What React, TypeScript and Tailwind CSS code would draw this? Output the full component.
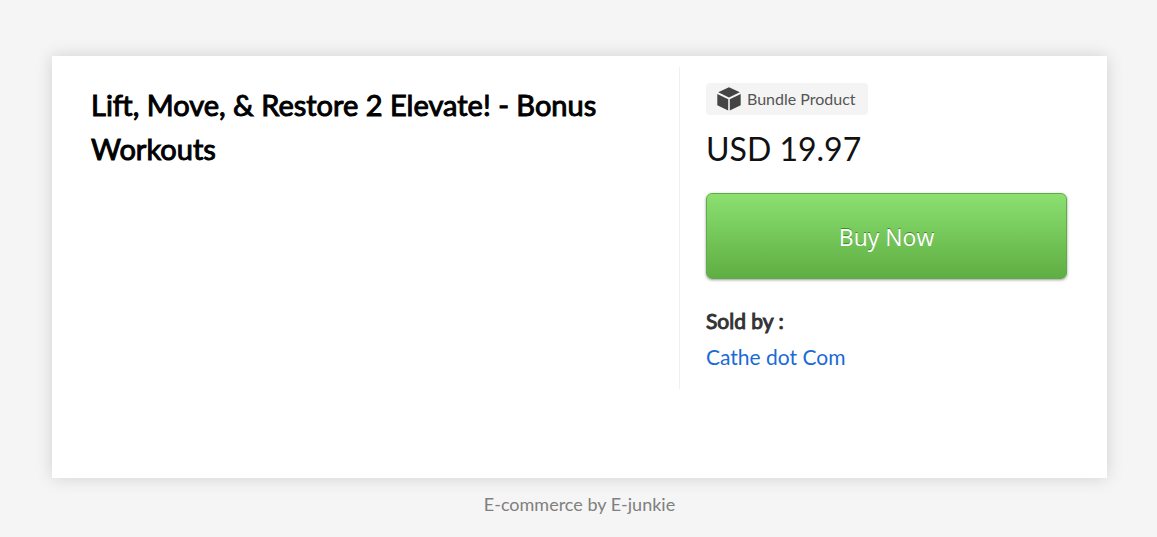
import React from 'react';

const product = {
  name: 'Lift, Move, & Restore 2 Elevate! - Bonus Workouts',
  type: 'Bundle Product',
  price: 'USD 19.97',
  seller: 'Cathe dot Com'
};

const BundleIcon: React.FC = () => {
  return <svg viewBox="0 0 24 24" className="h-6 w-6 fill-[#444444]" aria-hidden="true">
      <path d="M12 0.2 22.8 5.3 12 10.6 1.2 5.3Z" />
      <path d="M0.3 7 11.2 12.2V23.6L0.3 18.2Z" />
      <path d="M23.7 7 12.8 12.2V23.6L23.7 18.2Z" />
    </svg>;
};

const App: React.FC = () => {
  return <div className="min-h-screen bg-[#f5f5f5] pt-14 pr-[50px] pl-[52px] font-['Lato',sans-serif]">
      {/* Product card */}
      <main className="bg-white pt-[11px] pb-[89px] shadow-[0_0_16px_rgba(0,0,0,0.15)]">
        <div className="grid grid-cols-[627fr_428fr]">
          <section className="px-[39px] pt-4">
            <h1 className="text-[29px] leading-[44px] font-normal text-black [-webkit-text-stroke:1px_black]">
              {product.name}
            </h1>
          </section>

          {/* Purchase column */}
          <section className="border-l border-[#f0f0f0] pt-4 pr-10 pb-[14px] pl-[26px]">
            <div className="flex h-8 w-fit items-center gap-[6px] rounded bg-[#f4f4f4] pr-3 pl-[11px] text-[16px] text-[#555555]">
              <BundleIcon />
              <span>{product.type}</span>
            </div>
            <p className="mt-3 text-[32px] leading-[44px] text-[#111111]">{product.price}</p>
            <button
              type="button"
              className="mt-[22px] h-[86px] w-full cursor-pointer rounded-md border border-[#5fae45] bg-linear-to-b from-[#8be070] to-[#5fae43] pt-[2px] font-['Open_Sans',sans-serif] text-[23px] text-white shadow-[0_1px_3px_rgba(0,0,0,0.4)] [text-shadow:0_-1px_0_#3f8a28]"
            >
              Buy Now
            </button>
            <h2 className="mt-6 text-[21px] leading-9 font-normal text-[#333333] [-webkit-text-stroke:1px_#333333]">
              Sold by :
            </h2>
            <a href="#" className="block w-fit text-[21px] leading-9 text-[#1b6ad6]">
              {product.seller}
            </a>
          </section>
        </div>
      </main>

      <footer className="pt-3 text-center text-[18px] leading-7 text-[#808080]">
        <a href="#">E-commerce by E-junkie</a>
      </footer>
    </div>;
};
export default App;
